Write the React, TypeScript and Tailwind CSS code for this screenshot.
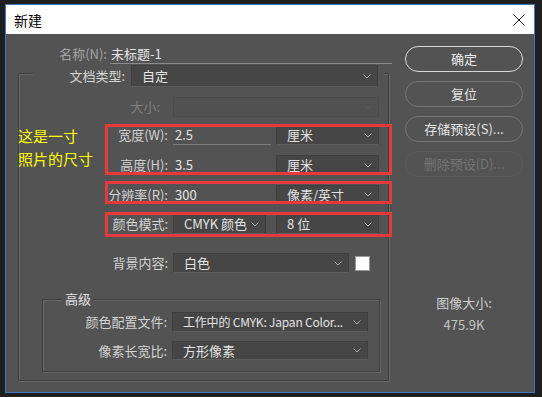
import React from "react";

const FONT = { fontFamily: '"Noto Sans CJK SC", "Noto Sans", sans-serif' };

const Chevron = ({ dim = false }: { dim?: boolean }) => (
  <svg width="8" height="5" viewBox="0 0 8 5" className="shrink-0">
    <polyline
      points="0.5,0.5 4,4 7.5,0.5"
      fill="none"
      stroke={dim ? "#5e5e5e" : "#a9a9a9"}
      strokeWidth="1"
    />
  </svg>
);

type SelectProps = {
  value?: string;
  width: string;
  disabled?: boolean;
  height?: string;
  textSize?: string;
};

const Select = ({
  value = "",
  width,
  disabled = false,
  height = "h-[20px]",
  textSize = "text-[13px]",
}: SelectProps) => (
  <div
    className={`${width} ${height} flex items-center justify-between gap-[3px] pl-[10px] pr-[6px] border ${
      disabled
        ? "border-[#4a4a4a] bg-[#515151]"
        : "border-[#3f3f3f] border-b-[#5c5c5c] bg-[#464646]"
    }`}
  >
    <span className={`${textSize} leading-[16px] text-[#e2e2e2] whitespace-nowrap`}>{value}</span>
    <Chevron dim={disabled} />
  </div>
);

const Label = ({ text, dim = false, pr = "" }: { text: string; dim?: boolean; pr?: string }) => (
  <div
    className={`w-[149px] text-right text-[13px] leading-[16px] whitespace-nowrap ${pr} ${
      dim ? "text-[#808080]" : "text-[#d2d2d2]"
    }`}
  >
    {text}
  </div>
);

const PillButton = ({
  text,
  variant,
}: {
  text: string;
  variant: "primary" | "normal" | "disabled";
}) => {
  const cls =
    variant === "primary"
      ? "border-[#d8d8d8] text-[#ececec] border-[1.5px]"
      : variant === "normal"
      ? "border-[#767676] text-[#e4e4e4] border-[1.5px]"
      : "border-[#5a5a5a] text-[#747474] border";
  return (
    <div
      className={`w-[118px] h-[26px] rounded-full flex items-center justify-center text-[13px] leading-[16px] ${cls}`}
    >
      {text}
    </div>
  );
};

export default function App() {
  return (
    <div className="w-[542px] h-[397px] bg-[#1e1e1e] pt-[4px] pl-[5px] overflow-hidden" style={FONT}>
      <div className="w-[530px] h-[389px] border border-[#3d7cc0] flex flex-col">
        {/* title bar */}
        <div className="h-[29px] bg-white flex items-center justify-between pl-[8px] pr-[9px] shrink-0">
          <span className="text-[14px] text-black leading-[18px]">新建</span>
          <svg width="12" height="12" viewBox="0 0 12 12">
            <line x1="0.5" y1="0.5" x2="11.5" y2="11.5" stroke="#111" strokeWidth="1" />
            <line x1="11.5" y1="0.5" x2="0.5" y2="11.5" stroke="#111" strokeWidth="1" />
          </svg>
        </div>

        {/* body */}
        <div className="relative flex-1 bg-[#535353] flex">
          {/* left column */}
          <div className="w-[389px] shrink-0 flex flex-col">
            {/* name */}
            <div className="mt-[10px] h-[20px] flex items-center">
              <div className="w-[101px] text-right text-[13px] leading-[16px] text-[#a3a3a3]">名称(N):</div>
              <div className="ml-[3px] w-[282px] h-[20px] flex items-center border-b border-[#8a8a8a] pl-[1px] text-[13px] leading-[16px] text-[#e4e4e4]">
                未标题-1
              </div>
            </div>

            {/* main frame */}
            <div className="mt-[9px] ml-[12px] w-[371px] h-[308px] border border-[#3e3e3e] shadow-[1px_1px_0_#676767,inset_1px_1px_0_#676767] flex flex-col">
              {/* doc type row, covers the top border */}
              <div className="-mt-[9px] ml-[14px] w-[352px] h-[22px] bg-[#535353] flex items-center">
                <div className="w-[92px] text-right text-[13px] leading-[16px] text-[#d6d6d6]">文档类型:</div>
                <div className="ml-[6px]">
                  <Select value="自定" width="w-[247px]" height="h-[22px]" />
                </div>
              </div>

              {/* size */}
              <div className="mt-[10px] flex items-center">
                <Label text="大小:" dim pr="pr-[8px]" />
                <div className="ml-[5px]">
                  <Select width="w-[206px]" disabled />
                </div>
              </div>

              {/* width */}
              <div className="mt-[8px] flex items-center">
                <Label text="宽度(W):" />
                <div className="ml-[5px] w-[98px] h-[19px] border-b border-[#7c7c7c] flex items-center pl-[2px] text-[13px] leading-[16px] text-[#e4e4e4]">
                  2.5
                </div>
                <div className="ml-[5px]">
                  <Select value="厘米" width="w-[103px]" />
                </div>
              </div>

              {/* height */}
              <div className="mt-[10px] flex items-center">
                <Label text="高度(H):" />
                <div className="ml-[5px] w-[98px] h-[18px] border-b border-[#3f7bd4] flex items-center pl-[2px] text-[13px] leading-[16px] text-[#e4e4e4]">
                  3.5
                </div>
                <div className="ml-[5px]">
                  <Select value="厘米" width="w-[103px]" />
                </div>
              </div>

              {/* resolution */}
              <div className="mt-[10px] flex items-center">
                <Label text="分辨率(R):" />
                <div className="ml-[5px] w-[98px] h-[19px] flex items-center pl-[2px] text-[13px] leading-[16px] text-[#e4e4e4]">
                  300
                </div>
                <div className="ml-[5px]">
                  <Select value="像素/英寸" width="w-[103px]" height="h-[19px]" />
                </div>
              </div>

              {/* color mode */}
              <div className="mt-[10px] flex items-center">
                <Label text="颜色模式:" />
                <div className="ml-[5px]">
                  <Select value="CMYK 颜色" width="w-[93px]" />
                </div>
                <div className="ml-[10px]">
                  <Select value="8 位" width="w-[103px]" />
                </div>
              </div>

              {/* background */}
              <div className="mt-[19px] flex items-center">
                <Label text="背景内容:" />
                <div className="ml-[5px]">
                  <Select value="白色" width="w-[176px]" />
                </div>
                <div className="ml-[6px] w-[15px] h-[15px] bg-white border border-[#9a9a9a]" />
              </div>

              {/* advanced frame */}
              <div className="mt-[26px] ml-[23px] w-[338px] h-[73px] border border-[#3e3e3e] shadow-[1px_1px_0_#676767,inset_1px_1px_0_#676767] flex flex-col">
                <div className="-mt-[9px] ml-[19px] px-[3px] h-[16px] self-start bg-[#535353] text-[13px] leading-[16px] text-[#e0e0e0]">
                  高级
                </div>
                <div className="mt-[5px] -ml-[25px] flex items-center">
                  <Label text="颜色配置文件:" />
                  <div className="ml-[5px]">
                    <Select
                      value="工作中的 CMYK: Japan Color..."
                      width="w-[196px]"
                      textSize="text-[12px] tracking-[-0.2px]"
                    />
                  </div>
                </div>
                <div className="mt-[9px] -ml-[25px] flex items-center">
                  <Label text="像素长宽比:" />
                  <div className="ml-[5px]">
                    <Select value="方形像素" width="w-[196px]" height="h-[19px]" />
                  </div>
                </div>
              </div>
            </div>
          </div>

          {/* right column */}
          <div className="pl-[10px] pt-[12px] flex flex-col">
            <div className="flex flex-col gap-[9px]">
              <PillButton text="确定" variant="primary" />
              <PillButton text="复位" variant="normal" />
              <PillButton text="存储预设(S)..." variant="normal" />
              <PillButton text="删除预设(D)..." variant="disabled" />
            </div>
            <div className="mt-[115px] w-[118px] flex flex-col items-center text-[13px] leading-[22px] text-[#d0d0d0]">
              <span>图像大小:</span>
              <span className="text-[#c4c4c4]">475.9K</span>
            </div>
          </div>

          {/* annotations */}
          <div className="absolute left-[12px] top-[90px] text-[15px] leading-[23px] text-[#ffff00]">
            <div>这是一寸</div>
            <div>照片的尺寸</div>
          </div>
          <div className="absolute left-[99px] top-[90px] w-[287px] h-[51px] border-[3px] border-[#e5393d]" />
          <div className="absolute left-[99px] top-[147px] w-[287px] h-[23px] border-[3px] border-[#e5393d]" />
          <div className="absolute left-[99px] top-[178px] w-[287px] h-[25px] border-[3px] border-[#e5393d]" />
        </div>
      </div>
    </div>
  );
}
